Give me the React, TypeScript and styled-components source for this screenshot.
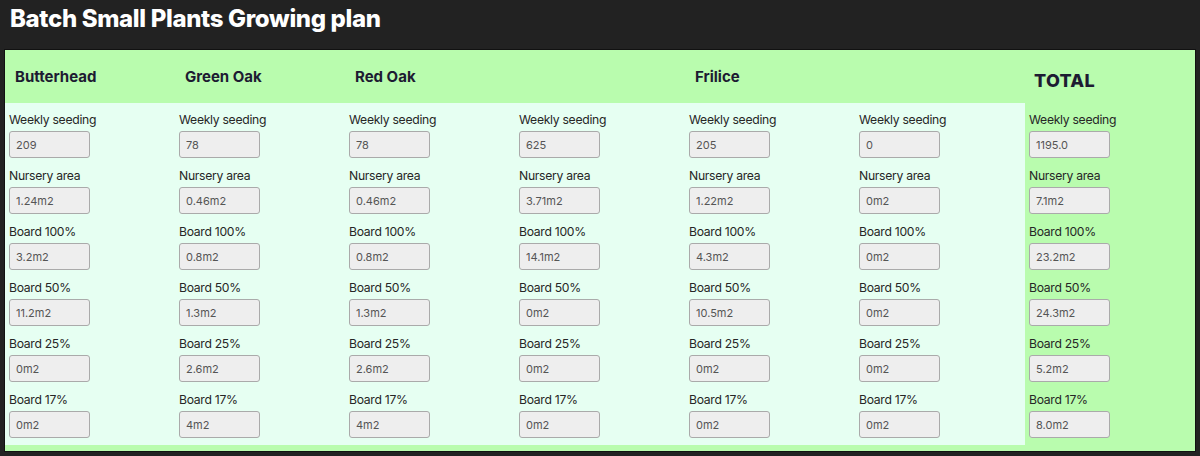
import React from "react";
import styled, { createGlobalStyle } from "styled-components";

const GlobalStyle = createGlobalStyle`
  html, body {
    margin: 0;
    padding: 0;
    background: #222222;
  }
  body {
    font-family: Inter, "Liberation Sans", Arial, sans-serif;
  }
`;

const Page = styled.div`
  width: 1200px;
  height: 456px;
  background: #222222;
  overflow: hidden;
`;

const Title = styled.h1`
  margin: 0;
  height: 49px;
  box-sizing: border-box;
  padding: 4px 0 0 10px;
  font-family: Inter, "Liberation Sans", Arial, sans-serif;
  font-size: 24px;
  font-weight: 800;
  line-height: 30px;
  color: #ffffff;
  letter-spacing: -0.35px;
`;

const Panel = styled.div`
  margin-left: 4px;
  width: 1192px;
  box-sizing: border-box;
  border: 1px solid #111111;
  background: #b9fcae;
  display: flex;
  padding-bottom: 6px;
`;

const PlantsSection = styled.div`
  display: flex;
  flex-direction: column;
  width: 1020px;
`;

const HeaderRow = styled.div`
  display: grid;
  grid-template-columns: repeat(6, 170px);
  height: 53px;
`;

const HeaderCell = styled.div`
  display: flex;
  align-items: center;
  padding: 0 0 0 10px;
  font-size: 15px;
  font-weight: 700;
  color: #1d1b32;
`;

const Body = styled.div`
  display: grid;
  grid-template-columns: repeat(6, 170px);
  background: #e6fff2;
`;

const Column = styled.div`
  display: flex;
  flex-direction: column;
  padding: 9px 4px 7px 4px;
`;

const TotalColumn = styled.div`
  width: 170px;
  display: flex;
  flex-direction: column;
`;

const TotalHeader = styled.div`
  height: 53px;
  box-sizing: border-box;
  display: flex;
  align-items: center;
  padding: 8px 0 0 9px;
  font-size: 18px;
  font-weight: 800;
  color: #1d1b32;
  letter-spacing: 0.3px;
`;

const Field = styled.div`
  display: flex;
  flex-direction: column;
  gap: 3px;
  & + & {
    margin-top: 10px;
  }
`;

const Label = styled.label`
  font-size: 12.2px;
  line-height: 16px;
  letter-spacing: -0.3px;
  color: #262626;
`;

const ValueInput = styled.input`
  width: 81px;
  height: 27px;
  box-sizing: border-box;
  margin: 0;
  padding: 0 0 0 6px;
  border: 1px solid #aaaaaa;
  border-radius: 3px;
  background: #eeeeee;
  font-family: Inter, "Liberation Sans", Arial, sans-serif;
  font-size: 11px;
  color: #555555;
  outline: none;
`;

const LABELS = [
  "Weekly seeding",
  "Nursery area",
  "Board 100%",
  "Board 50%",
  "Board 25%",
  "Board 17%",
];

type Plant = { name?: string; values: string[] };

const PLANTS: Plant[] = [
  { name: "Butterhead", values: ["209", "1.24m2", "3.2m2", "11.2m2", "0m2", "0m2"] },
  { name: "Green Oak", values: ["78", "0.46m2", "0.8m2", "1.3m2", "2.6m2", "4m2"] },
  { name: "Red Oak", values: ["78", "0.46m2", "0.8m2", "1.3m2", "2.6m2", "4m2"] },
  { values: ["625", "3.71m2", "14.1m2", "0m2", "0m2", "0m2"] },
  { name: "Frilice", values: ["205", "1.22m2", "4.3m2", "10.5m2", "0m2", "0m2"] },
  { values: ["0", "0m2", "0m2", "0m2", "0m2", "0m2"] },
];

const TOTALS = ["1195.0", "7.1m2", "23.2m2", "24.3m2", "5.2m2", "8.0m2"];

const Fields: React.FC<{ values: string[] }> = ({ values }) => (
  <>
    {LABELS.map((label, i) => (
      <Field key={label}>
        <Label>{label}</Label>
        <ValueInput readOnly value={values[i]} />
      </Field>
    ))}
  </>
);

export default function App() {
  return (
    <Page>
      <GlobalStyle />
      <Title>Batch Small Plants Growing plan</Title>
      <Panel>
        <PlantsSection>
          <HeaderRow>
            {PLANTS.map((p, i) => (
              <HeaderCell key={i}>{p.name ?? ""}</HeaderCell>
            ))}
          </HeaderRow>
          <Body>
            {PLANTS.map((p, i) => (
              <Column key={i}>
                <Fields values={p.values} />
              </Column>
            ))}
          </Body>
        </PlantsSection>
        <TotalColumn>
          <TotalHeader>TOTAL</TotalHeader>
          <Column>
            <Fields values={TOTALS} />
          </Column>
        </TotalColumn>
      </Panel>
    </Page>
  );
}
